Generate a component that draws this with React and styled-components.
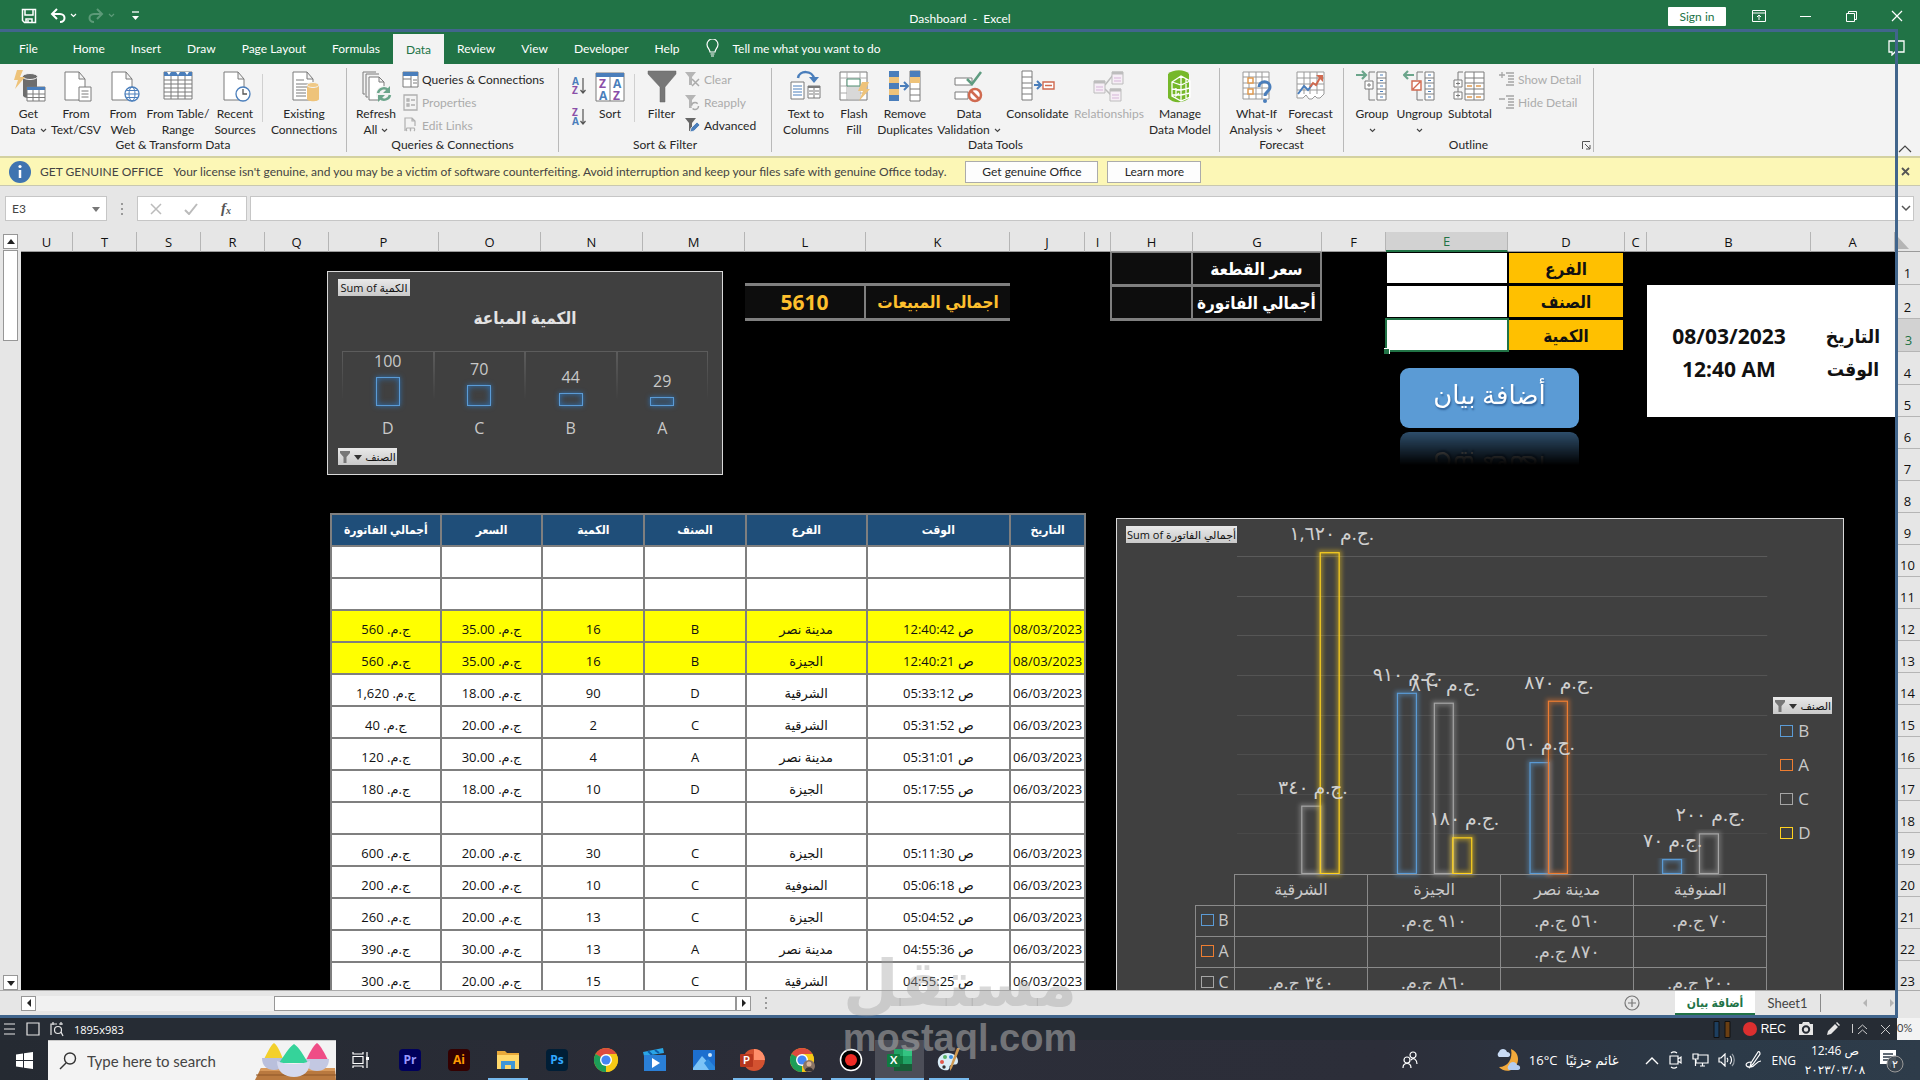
import React from 'react'
import styled, { createGlobalStyle, css } from 'styled-components'

const ui = `Lato, 'DejaVu Sans', sans-serif`
const cells = `'Open Sans', 'DejaVu Sans', sans-serif`
const narrow = `'Open Sans', 'DejaVu Sans Condensed', 'DejaVu Sans', sans-serif`
const GREEN = '#217346'

const GlobalStyle = createGlobalStyle`
  * { box-sizing: border-box; }
  body { margin: 0; font-family: ${ui}; font-size: 12px; color: #262626; overflow: hidden; }
  button, input { font-family: inherit; font-size: inherit; color: inherit; }
  button { border: 0; padding: 0; background: none; white-space: nowrap; }
  svg { display: block; flex: none; }
`

const Window = styled.div`
  position: relative;
  display: flex;
  flex-direction: column;
  height: 100vh;
  background: #e6e6e6;
`

/* ---------- title bar and tabs ---------- */

const TitleBar = styled.header`
  display: grid;
  grid-template-columns: 1fr auto 1fr;
  align-items: center;
  flex: none;
  height: 32px;
  background: ${GREEN};
  color: #fff;
`
const QuickAccess = styled.div`
  display: flex;
  align-items: center;
  gap: 8px;
  padding-left: 21px;

  button:first-child { margin-right: 5px; }
`
const Title = styled.h1`
  margin: 4px 0 0;
  font-size: 12px;
  font-weight: 400;
  white-space: pre;
`
const WindowButtons = styled.div`
  display: flex;
  align-items: center;
  justify-content: flex-end;
`
const WindowButton = styled.button`
  display: grid;
  place-items: center;
  width: 46px;
`
const SignIn = styled.button`
  width: 58px;
  height: 19px;
  margin-right: 10px;
  border-radius: 1px;
  background: #fff;
  color: ${GREEN};
`

const TabBar = styled.nav`
  display: flex;
  align-items: stretch;
  flex: none;
  height: 32px;
  padding-left: 6px;
  background: ${GREEN};
  color: #fff;
`
const Tab = styled.button`
  padding: 0 13px;
  ${({ $wide }) => $wide && css`padding-right: 22px;`}
  ${({ $active }) => $active && css`
    margin-top: 2px;
    background: #f3f3f3;
    color: ${GREEN};
  `}
`
const TellMe = styled.button`
  display: flex;
  align-items: center;
  gap: 13px;
  margin-left: 14px;
`
const Comments = styled.button`
  margin-left: auto;
  padding-right: 14px;
`

/* ---------- ribbon ---------- */

const Ribbon = styled.div`
  display: flex;
  flex: none;
  height: 92px;
  padding: 4px 0;
  background: #f3f3f3;
  position: relative;
`
const Group = styled.section`
  display: flex;
  flex-direction: column;
  width: ${({ $width }) => $width}px;
  border-right: 1px solid #b9b9b9;
`
const GroupBody = styled.div`
  display: flex;
  height: 72px;
  padding-left: ${({ $pad }) => $pad || 5}px;
`
const GroupLabel = styled.h2`
  position: relative;
  margin: 0;
  font-size: 12px;
  line-height: 14px;
  font-weight: 400;
  text-align: center;
`
const BigButton = styled.button`
  display: flex;
  flex-direction: column;
  align-items: center;
  width: ${({ $width }) => $width}px;
  padding-top: 2px;
  line-height: 16px;
  color: ${({ disabled }) => (disabled ? '#ababab' : '#262626')};

  svg.big { margin-bottom: 2px; }
`
const Line = styled.span`
  display: flex;
  align-items: center;
  gap: 4px;
  min-height: 16px;
`
const SmallList = styled.div`
  display: flex;
  flex-direction: column;
  padding-left: ${({ $pad }) => $pad || 0}px;
`
const SortList = styled(SmallList)`
  gap: 7px;
  padding-top: 5px;
`
const SmallButton = styled.button`
  display: flex;
  align-items: center;
  gap: 3px;
  height: 23px;
  color: ${({ disabled }) => (disabled ? '#ababab' : '#262626')};
`
const Divider = styled.i`
  width: 1px;
  height: 48px;
  margin: 6px 4px 0 2px;
  background: #d0d0d0;
`
const Launcher = styled.button`
  position: absolute;
  right: 2px;
  top: 3px;
`
const Collapse = styled.button`
  position: absolute;
  right: 8px;
  bottom: 3px;
`

/* ---------- message bar ---------- */

const Notice = styled.div`
  display: flex;
  align-items: center;
  flex: none;
  height: 30px;
  padding: 0 10px 0 9px;
  border-top: 2px solid #d3d1a0;
  border-bottom: 1px solid #c9c8b0;
  background: #fcf7b6;
  color: #444;

  strong { margin: 0 10px 0 9px; font-weight: 400; }
  > button:last-child { margin-left: auto; }
`
const NoticeButton = styled.button`
  width: ${({ $width }) => $width}px;
  height: 22px;
  margin-left: ${({ $gap }) => $gap}px;
  border: 1px solid #ababab;
  background: #fdfdfd;
  color: #262626;
`

/* ---------- formula bar ---------- */

const FormulaBar = styled.div`
  display: flex;
  flex: none;
  height: 46px;
  padding: 10px 6px 11px 5px;
`
const NameBox = styled.div`
  display: flex;
  align-items: center;
  width: 102px;
  padding-right: 6px;
  border: 1px solid #c6c6c6;
  background: #fff;

  input { width: 100%; padding: 0 0 0 6px; border: 0; outline: 0; background: none; color: #444; }
`
const Grip = styled.div`
  display: grid;
  place-items: center;
  width: 30px;
`
const FormulaButtons = styled.div`
  display: flex;
  align-items: center;
  justify-content: space-between;
  width: 110px;
  padding: 0 12px;
  border: 1px solid #c6c6c6;
  background: #fff;
`
const FormulaBox = styled.div`
  display: flex;
  align-items: center;
  flex: 1;
  margin-left: 3px;
  padding-right: 2px;
  border: 1px solid #c6c6c6;
  background: #fff;

  input { flex: 1; border: 0; outline: 0; background: none; }
`

/* ---------- sheet ---------- */

const Workspace = styled.main`
  display: flex;
  flex: 1;
  min-height: 0;
  font-family: ${cells};
`
const VerticalScroll = styled.div`
  display: flex;
  flex-direction: column;
  width: 21px;
  padding: 2px 3px 0;
`
const ScrollButton = styled.button`
  display: grid;
  place-items: center;
  width: 15px;
  height: 15px;
  flex: none;
  border: 1px solid #979797;
  background: #fff;
`
const Thumb = styled.div`
  border: 1px solid #979797;
  background: #fff;
  ${({ $vertical }) => $vertical ? css`height: 91px; margin: 1px 0 auto;` : css`flex: 0 0 462px; height: 15px;`}
`

const columns = [
  ['U', 52], ['T', 64], ['S', 64], ['R', 64], ['Q', 64], ['P', 110], ['O', 102], ['N', 102],
  ['M', 102], ['L', 121], ['K', 144], ['J', 75], ['I', 26], ['H', 82], ['G', 129], ['F', 64],
  ['E', 122], ['D', 117], ['C', 22], ['B', 164], ['A', 84],
]
const col = (letter) => columns.findIndex(([l]) => l === letter) + 1

const Sheet = styled.div`
  display: grid;
  flex: 1;
  min-width: 0;
  grid-template-columns: ${columns.map(([, w]) => `minmax(0, ${w}fr)`).join(' ')} 25px;
  grid-template-rows: 20px 33px 34px 33px 33px repeat(19, 32px);
  overflow: hidden;
  background: #000;
`
const ColumnHead = styled.div`
  grid-row: 1;
  display: grid;
  place-items: center;
  border-right: 1px solid #b5b5b5;
  border-bottom: ${({ $on }) => ($on ? `2px solid ${GREEN}` : '1px solid #9b9b9b')};
  background: ${({ $on }) => ($on ? '#d2d2d2' : '#e6e6e6')};
  color: ${({ $on }) => ($on ? GREEN : '#111')};
  font-size: 13px;
  line-height: 18px;
`
const RowHead = styled(ColumnHead)`
  grid-row: ${({ $row }) => $row + 1};
  grid-column: 22;
  place-items: end center;
  padding-bottom: 2px;
  border-right: 0;
  border-left: ${({ $on }) => ($on ? `2px solid ${GREEN}` : '0')};
  border-bottom: 1px solid #b5b5b5;
`
const Corner = styled.div`
  grid-row: 1;
  grid-column: 22;
  padding: 4px 0 0 2px;
  border-bottom: 1px solid #9b9b9b;
  background: #e6e6e6;
`
const area = css`
  grid-row: ${({ $row, $rows = 1 }) => `${$row + 1} / span ${$rows}`};
  grid-column: ${({ $from, $to }) => `${col($from)} / ${col($to || $from) + 1}`};
`
const FieldLabel = styled.label`
  ${area}
  display: grid;
  place-items: center;
  margin: 1px 2px 2px 1px;
  background: #ffc000;
  color: #111;
  font-family: ${narrow};
  font-size: 17px;
  font-weight: 700;
`
const FieldInput = styled.input`
  ${area}
  width: auto;
  min-width: 0;
  margin: ${({ $active }) => ($active ? '-1px -1px 0 -1px' : '1px 1px 2px 1px')};
  border: ${({ $active }) => ($active ? `2px solid ${GREEN}` : '0')};
  border-radius: 0;
  outline: 0;
  background: #fff;
`
const FillHandle = styled.i`
  ${area}
  align-self: end;
  z-index: 1;
  width: 6px;
  height: 6px;
  margin: 0 0 -2px -2px;
  border: 1px solid #fff;
  border-width: 1px 1px 0 0;
  background: ${GREEN};
`
const DarkBox = styled.dl`
  ${area}
  display: grid;
  grid-template-columns: ${({ $columns }) => $columns};
  margin: ${({ $margin }) => $margin};
  border: solid #7f7f7f;
  border-width: ${({ $edges }) => $edges};
  background: #0d0d0d;
  color: ${({ $color }) => $color};
  font-family: ${narrow};
  font-weight: 700;

  dt, dd {
    display: grid;
    place-items: center;
    min-width: 0;
    margin: 0;
    line-height: 24px;
    white-space: nowrap;
  }
  dt { font-size: 17px; }
  dd { border-right: 2px solid #7f7f7f; font-size: 21px; }
  dt:nth-of-type(2), dd:nth-of-type(2) { border-top: 3px solid #7f7f7f; }
`
const DateCard = styled.dl`
  ${area}
  display: grid;
  grid-template-columns: 164fr 84fr;
  grid-auto-rows: 33px;
  margin: 0;
  padding-top: 34px;
  background: #fff;
  color: #111;
  font-family: ${narrow};
  font-size: 21px;
  font-weight: 700;

  dt, dd { display: grid; place-items: center; margin: 0; white-space: nowrap; }
  dt { font-size: 19px; }
`
const AddButton = styled.button`
  ${area}
  height: 60px;
  margin: 16px 46px 0 14px;
  padding-bottom: 8px;
  border-radius: 9px;
  background: #5b9bd5;
  color: #fff;
  font-size: 26px;
  line-height: 50px;
  text-shadow: 1px 2px 2px #2f5f96;
  -webkit-box-reflect: below 4px linear-gradient(transparent 45%, rgba(0, 0, 0, 0.5));
`

const DataTable = styled.table`
  ${area}
  align-self: start;
  width: 100%;
  margin-left: 1px;
  border-collapse: collapse;
  table-layout: fixed;
  background: #fff;
  color: #111;
  font-size: 13px;

  th, td {
    height: 32px;
    padding: 0;
    border: 2px solid #7f7f7f;
    text-align: center;
    vertical-align: bottom;
    line-height: 18px;
    white-space: nowrap;
  }
  td { padding-bottom: 3px; }
  th {
    vertical-align: middle;
    background: #1f4e79;
    color: #fff;
    font-family: ${narrow};
    font-size: 12px;
  }
`
const DataRow = styled.tr`
  background: ${({ $marked }) => ($marked ? '#ffff00' : '#fff')};
`

/* ---------- charts ---------- */

const FieldButton = styled.button`
  display: flex;
  align-items: center;
  justify-content: center;
  gap: 3px;
  width: ${({ $width }) => $width}px;
  height: 17px;
  background: linear-gradient(#e9e9e9, #c9c9c9);
  color: #111;
  font-size: 11px;
`
const SmallChart = styled.section`
  ${area}
  display: flex;
  flex-direction: column;
  margin: 19px 22px 6px -2px;
  padding: 7px 10px 9px;
  border: 1px solid #d9d9d9;
  background: #404040;
  z-index: 1;

  h3 {
    margin: 8px 0 19px;
    color: #e3e3e3;
    font-family: ${narrow};
    font-size: 17px;
    line-height: 28px;
    text-align: center;
  }
`
const Bars = styled.div`
  display: grid;
  grid-template-columns: repeat(4, 1fr);
  margin: 0 4px auto;
`
const BarColumn = styled.div`
  display: flex;
  flex-direction: column;
  align-items: center;
  height: 86px;
  color: #c9c9c9;
  font-size: 16px;
  line-height: 18px;
  border-top: 1px solid #5c5c5c;
  background: linear-gradient(#5c5c5c, #404040) left top / 1px 48px no-repeat,
    linear-gradient(#5c5c5c, #404040) right top / 1px 48px no-repeat;

  span { margin-top: auto; }
  b { margin-top: 13px; font-weight: 400; }
`
const Bar = styled.i`
  width: 24px;
  margin-top: 7px;
  border: 1px solid #5b9bd5;
  box-shadow: 0 0 5px #2f70b0, inset 0 0 6px #2f70b0;
`
const BigChart = styled.section`
  ${area}
  display: grid;
  grid-template-columns: 118fr 532fr 76fr;
  grid-template-rows: 355px auto;
  margin: 5px 51px 0 5px;
  border: 1px solid #d9d9d9;
  border-bottom: 0;
  background: #404040;
  color: #c9c9c9;
  z-index: 1;

  > button { margin: 7px 0 0 9px; }
  > svg { overflow: visible; width: 100%; height: 355px; }
`
const Legend = styled.ul`
  display: flex;
  flex-direction: column;
  gap: 16px;
  margin: 178px 0 0 6px;
  padding: 0;
  list-style: none;
  font-size: 17px;
  line-height: 18px;

  li { display: flex; align-items: center; gap: 5px; padding-left: 7px; }
  li:first-child { padding: 0; height: 17px; margin-bottom: -8px; }
`
const Swatch = styled.i`
  display: inline-block;
  width: 13px;
  height: 12px;
  flex: none;
  border: 1px solid ${({ $color }) => $color};
`
const ChartTable = styled.table`
  grid-column: 1 / 3;
  justify-self: end;
  width: 88%;
  border-collapse: collapse;
  table-layout: fixed;
  font-size: 18px;

  th, td {
    height: 31px;
    padding: 0 0 3px;
    border: 1px solid #8a8a8a;
    font-weight: 400;
    text-align: center;
    line-height: 22px;
    white-space: nowrap;
  }
  th { font-size: 16px; }
  td:first-child { border: 0; }
  tbody th i { margin-right: 4px; }
`

/* ---------- sheet bar, recorder, taskbar ---------- */

const SheetBar = styled.footer`
  display: flex;
  align-items: center;
  flex: none;
  height: 28px;
  padding: 0 22px 3px 21px;
  border-top: 1px solid #ababab;
`
const Track = styled.div`
  flex: 0 0 238px;
  height: 15px;
  background: #f1f1f1;
`
const SheetTabs = styled.nav`
  display: flex;
  align-items: stretch;
  align-self: stretch;
  margin-left: auto;
`
const SheetTab = styled.button`
  display: grid;
  place-items: center;
  width: ${({ $width }) => $width}px;
  font-size: 13px;
  color: #444;
  ${({ $active }) => $active && css`
    border-bottom: 2px solid ${GREEN};
    background: #fff;
    color: ${GREEN};
    font-family: ${narrow};
    font-size: 12px;
    font-weight: 700;
  `}
`
const SheetArrows = styled.div`
  display: flex;
  align-items: center;
  justify-content: space-between;
  width: 78px;
  margin: 3px 0;
  padding: 0 2px 0 40px;
  border-left: 1px solid #8a8a8a;
`
const Recorder = styled.div`
  display: flex;
  align-items: center;
  flex: none;
  height: 22px;
  padding-left: 3px;
  background: #262c34;
  color: #fff;

  output { margin-left: 9px; font-family: ${cells}; font-size: 11px; }
`
const RecorderTools = styled.div`
  display: flex;
  align-items: center;
  gap: 12px;
  margin-left: auto;
  padding-right: 6px;
`
const Record = styled.button`
  display: flex;
  align-items: center;
  gap: 4px;
  font-family: 'Liberation Sans', sans-serif;
  font-size: 12px;
`
const ZoomLevel = styled.span`
  align-self: stretch;
  width: 23px;
  background: #f3f3f3;
  color: #444;
  font-size: 11px;
  line-height: 20px;
`
/* outline of the region being recorded */
const CaptureFrame = styled.div`
  position: absolute;
  inset: 29px 22px 62px -3px;
  border: 3px solid #41658c;
  pointer-events: none;
  z-index: 3;
`
const Taskbar = styled.footer`
  display: flex;
  align-items: stretch;
  flex: none;
  height: 40px;
  background: linear-gradient(90deg, #252a32, #2b2d38 40%, #2c2e39 72%, #2c3a48 90%, #2e3c4a);
  color: #fff;
`
const StartButton = styled.button`
  display: grid;
  place-items: center;
  width: 48px;
`
const SearchBox = styled.label`
  display: flex;
  align-items: center;
  gap: 10px;
  width: 288px;
  padding-left: 11px;
  border-top: 1px solid #c9c9c9;
  background: #f3f3f3;
  color: #444;

  input { flex: 1; min-width: 0; padding: 0; border: 0; outline: 0; background: none; font-size: 15px; }
  input::placeholder { color: #444; opacity: 1; }
  svg:last-child { align-self: flex-end; }
`
const AppButton = styled.button`
  display: grid;
  place-items: center;
  width: 49px;
  ${({ $open }) => $open && css`
    background: linear-gradient(#76b9ed, #76b9ed) bottom / 40px 2px no-repeat;
  `}
  ${({ $active }) => $active && css`
    background: linear-gradient(#76b9ed, #76b9ed) bottom / 49px 2px no-repeat, #4c4e58;
  `}
`
const Tray = styled.div`
  display: flex;
  align-items: center;
  margin-left: auto;
  padding-right: 16px;
  font-family: ${cells};
`
const Weather = styled.button`
  display: flex;
  align-items: center;
  gap: 8px;
  margin: 0 26px 0 78px;
  font-size: 13px;
`
const TrayIcons = styled.div`
  display: flex;
  align-items: center;
  gap: 9px;
`
const Clock = styled.time`
  display: flex;
  flex-direction: column;
  align-items: center;
  width: 60px;
  margin: 0 15px 0 9px;
  line-height: 19px;
`
const Watermark = styled.div`
  position: absolute;
  left: 44%;
  bottom: 22px;
  width: 12%;
  display: flex;
  flex-direction: column;
  align-items: center;
  color: rgba(160, 160, 160, 0.4);
  font-family: 'DejaVu Sans', sans-serif;
  font-size: 64px;
  line-height: 68px;
  font-weight: 700;
  pointer-events: none;
  z-index: 4;

  b { color: rgba(165, 165, 165, 0.6); font-family: 'Liberation Sans', sans-serif; font-size: 38px; line-height: 40px; }
`

/* ---------- icons ---------- */

const G = '#7a7a7a'
const B = '#4a7ebb'

const Caret = ({ color = '#444' }) => (
  <svg width="7" height="5" viewBox="0 0 7 5" fill="none" stroke={color} strokeWidth="1.1"><path d="M1 1l2.500 2.500L6 1" /></svg>
)
const Triangle = ({ dir = 'down', color = '#222' }) => {
  const d = { down: 'M0 2h8L4 7z', up: 'M0 6h8L4 1z', left: 'M6 0v8L2 4z', right: 'M2 0v8l4-4z' }[dir]
  return <svg width="8" height="8" viewBox="0 0 8 8"><path d={d} fill={color} /></svg>
}
const FunnelMini = () => (
  <svg width="12" height="12" viewBox="0 0 12 12"><path d="M1 0h10v2L7.500 6v6h-3V6L1 2z" fill="#777" /></svg>
)
const Page = () => <path d="M6 2h14l6 7v21H6zM20 2v7h6" fill="#fff" stroke={G} />

const art = {
  getData: (
    <>
      <path d="M11 7v19c2 2 4 2 6 2h8V7" fill="#6d6d6d" />
      <ellipse cx="18" cy="6.500" rx="7.500" ry="3" fill="#6d6d6d" stroke="#f3f3f3" />
      <path d="M5 0h6L8 7h5L3 19l3-9H2z" fill="#eec37a" />
      <path d="M15 17h18v14H15z" fill="#fff" stroke={G} /><path d="M15 17h18v3H15z" fill={B} />
      <path d="M15 24h18M15 27.500h18M21 20v11M27 20v11" stroke={G} />
    </>
  ),
  textCsv: (<><Page /><path d="M20 17h12v14H20z" fill="#fff" stroke={G} /><path d="M22.500 21h7M22.500 24h7M22.500 27h7" stroke={G} /></>),
  web: (<><Page /><circle cx="26" cy="24" r="7" fill="#fff" stroke={B} strokeWidth="1.300" /><ellipse cx="26" cy="24" rx="3" ry="7" fill="none" stroke={B} /><path d="M19 24h14M20.500 20.500h11M20.500 27.500h11" stroke={B} /></>),
  table: (<><path d="M3 2h28v27H3z" fill="#fff" stroke={G} /><path d="M3 2h28v4H3z" fill={B} /><path d="M6 2h4l-2 3zM15 2h4l-2 3zM24 2h4l-2 3z" fill="#fff" /><path d="M3 10h28M3 14h28M3 18h28M3 22h28M3 26h28M10 6v23M17 6v23M24 6v23" stroke={G} /></>),
  recent: (<><Page /><circle cx="25" cy="24" r="7" fill="#fff" stroke={B} strokeWidth="1.300" /><path d="M25 19v5h4" fill="none" stroke="#555" strokeWidth="1.300" /></>),
  existing: (<><Page /><path d="M9 10h8M9 14h13M9 17h13M9 20h10M9 23h10M9 26h10" stroke={G} /><path d="M20 15v14c0 3 12 3 12 0V15" fill="#eec37a" /><ellipse cx="26" cy="15" rx="6" ry="2.500" fill="#f0c986" stroke="#f3f3f3" /></>),
  refresh: (<><path d="M4 2h13M4 2v22h2M7 4h13M7 4v23h2" fill="none" stroke={G} /><path d="M10 7h10l5 5v18H10zM20 7v5h5" fill="#fff" stroke={G} /><circle cx="25" cy="24" r="8" fill="#f3f3f3" /><path d="M19 23a6 6 0 0 1 10-3M31 25a6 6 0 0 1-10 3" fill="none" stroke="#6ba58b" strokeWidth="2.500" /><path d="M31 16v7h-7zM19 32v-7h7z" fill="#6ba58b" /></>),
  sort: (<><path d="M3 3h28v28H3z" fill="#fff" stroke={G} /><path d="M3 3h28v4H3z" fill={B} /><path d="M17 7v24" stroke={G} /><g fontSize="12" fontWeight="700" fontFamily="Open Sans, sans-serif"><text x="6" y="18" fill="#8a4fa8">Z</text><text x="6" y="30" fill={B}>A</text><text x="20" y="18" fill={B}>A</text><text x="20" y="30" fill="#8a4fa8">Z</text></g></>),
  filter: <path d="M3 1h28v3L20 17v15h-5V17L3 4z" fill="#777" stroke="#666" strokeWidth=".5" />,
  textCols: (<><path d="M9 8c1-8 15-8 16 1" fill="none" stroke={B} strokeWidth="2.500" /><path d="M20 7h10l-5 6z" fill={B} /><path d="M2 12h13v17H2z" fill="#fff" stroke={G} /><path d="M4 16h9M4 19h9M4 22h9M4 25h9" stroke={B} /><path d="M19 16h12v12H19z" fill="#fff" stroke={G} /><path d="M19 16h12v2H19z" fill={G} /><path d="M25 16v12M20 21h4M20 24h4M26 21h4M26 24h4" stroke={G} /></>),
  flash: (<><path d="M3 2h27v28H3z" fill="#fff" stroke={G} /><path d="M3 8h27M3 16h27M3 23h27M10 2v28M23 2v28" stroke="#aaa" /><path d="M10 9h13v7H10z" fill="#fff" stroke="#4e8f72" /><path d="M10 17h13v12H10z" fill="#d8d8d8" /><path d="M25 12h7l-3 7h4l-11 12 4-10h-5z" fill="#eec37a" /></>),
  dupes: (<><path d="M1 1h10v30H1z" fill={B} /><path d="M1 7h10v6H1zM1 19h10v6H1z" fill="#eec37a" /><path d="M12 16h7" stroke={B} strokeWidth="2" /><path d="M16 12l4 4-4 4" fill="none" stroke={B} strokeWidth="2" /><path d="M22 1h10v30H22z" fill="#fff" stroke={G} /><path d="M22 1h10v6H22z" fill={B} /><path d="M22 7h10v6H22z" fill="#eec37a" /><path d="M22 19h10M22 25h10" stroke={G} /></>),
  validate: (<><path d="M3 8h17v7H3zM3 22h13v7H3z" fill="#fff" stroke={G} /><path d="M15 9l5 5L29 2" fill="none" stroke="#5f9c80" strokeWidth="2.500" /><circle cx="23" cy="25" r="6" fill="#fff" stroke="#d06a50" strokeWidth="2.500" /><path d="M19 21l8 8" stroke="#d06a50" strokeWidth="2.500" /></>),
  consolidate: (<><path d="M1 1h10v29H1zM1 7h10M1 13h10M1 18h10M1 24h10" fill="#fff" stroke={G} /><path d="M13 15h6" stroke={B} strokeWidth="2" /><path d="M16 11l4 4-4 4" fill="none" stroke={B} strokeWidth="2" /><path d="M22 12h11v7H22zM24 15.500h7" fill="#fff" stroke="#d06a50" strokeWidth="1.400" /></>),
  relations: (<g fill="#f6eef6" stroke="#bdbdbd"><path d="M13 15l8-10M13 19l7 7" fill="none" strokeWidth="1.500" /><path d="M2 11h11v12H2zM20 2h11v12H20zM18 19h11v12H18z" /><path d="M2 12h11M20 3h11M18 20h11" strokeWidth="3" /><path d="M4 17h7M4 20h7M22 8h7M22 11h7M20 25h7M20 28h7" stroke="#d5b5d8" /></g>),
  model: (<><path d="M5 4c5-5 17-5 21 0v24c-4 5-16 6-21 0z" fill="#76b82a" /><path d="M9 12l9-6 9 5v16l-9 4-9-5zM18 6v25M9 12l9 3 9-4M9 19l9 1 9-2M9 25l9 0 9-2M23 9v20M13 18v8l3-3" fill="none" stroke="#fff" strokeWidth="1.300" /></>),
  whatIf: (<><path d="M3 2h26v27H3zM3 7h26M3 13h26M3 18h26M3 24h26M9 2v27M16 2v27M22 2v27" fill="#fff" stroke="#999" /><path d="M8 8h5v5H8zM8 19h5v5H8z" fill="#fff" stroke="#e09a50" strokeWidth="1.500" /><path d="M19 17c0-7 11-7 11 0 0 5-5 4-5 9" fill="none" stroke={B} strokeWidth="3" /><circle cx="25" cy="31" r="2" fill={B} /></>),
  forecast: (<><path d="M3 2h27v22l-4 4h-3l-2-2-3 3h-3l-3-4-3 3H3zM3 8h27M3 14h27M3 20h27M10 2v22M16 2v22M23 2v22" fill="#fff" stroke="#999" /><path d="M4 24l6-8 4 4 4-5" fill="none" stroke={B} strokeWidth="2" /><path d="M16 17l3-4 3 2 5-9" fill="none" stroke="#d06a50" strokeWidth="2" /><path d="M22 5h7v7z" fill="#d06a50" /></>),
  group: (<><path d="M1 5h9M7 1l4 4-4 4" fill="none" stroke="#6ba58b" strokeWidth="2.200" /><path d="M20 2h-6v8M14 19v11h6" fill="none" stroke={G} /><path d="M10 11h8v8h-8zM14 13v4M12 15h4" fill="#fff" stroke={G} /><path d="M22 2h9v28h-9zM22 8h9M22 13h9M22 19h9M22 24h9" fill="#fff" stroke={G} /><path d="M25 5h3M25 10.500h3M25 16h3M25 21.500h3M25 27h3" stroke={B} /></>),
  ungroup: (<><path d="M2 5h9M5 1L1 5l4 4" fill="none" stroke="#6ba58b" strokeWidth="2.200" /><path d="M20 2h-6v8M14 19v11h6" fill="none" stroke={G} /><path d="M9 11h9v9H9zM10 19l7-7" fill="#fff" stroke="#d06a50" strokeWidth="1.400" /><path d="M22 2h9v28h-9zM22 8h9M22 13h9M22 19h9M22 24h9" fill="#fff" stroke={G} /><path d="M25 5h3M25 10.500h3M25 16h3M25 21.500h3M25 27h3" stroke={B} /></>),
  subtotal: (<><path d="M10 2H5v8M5 18v4" fill="none" stroke={G} /><path d="M1 10h8v7H1zM1 22h8v7H1zM5 11.500v4M3 13.500h4M5 23.500v4M3 25.500h4" fill="#fff" stroke={G} /><path d="M12 2h19v28H12zM12 8h19M12 13h19M12 19h19M12 24h19M21 2v28" fill="#fff" stroke={G} /><path d="M14 16h5M23 16h5M14 27h5M23 27h5" stroke="#e09a50" strokeWidth="1.500" /></>),
}
const Art = ({ name }) => <svg className="big" width="34" height="34" viewBox="0 0 34 34">{art[name]}</svg>

const small = {
  queries: (<><path d="M1 1h15v15H1z" fill="#fff" stroke={G} /><path d="M1 1h15v4H1z" fill={B} /><path d="M1 8h8M9 5v11M11 9h4M11 12h4" stroke={G} /></>),
  props: <path d="M2 1h13v15H2zM5 5h2v2H5zM5 10h2v2H5zM9 6h4M9 11h4" fill="none" stroke="#b0b0b0" strokeWidth="1.300" />,
  links: <path d="M3 14V1h7l3 3v5M10 1v3h3M5 14a2 2 0 0 1 0-3h3a2 2 0 0 1 0 3M12 14a2 2 0 0 0 0-3H9a2 2 0 0 0 0 3" fill="none" stroke="#b0b0b0" strokeWidth="1.200" />,
  clear: <><path d="M1 1h11L8 6v8H5V6z" fill="#b5b5b5" /><path d="M8 8l7 7M15 8l-7 7" stroke="#aaa" strokeWidth="1.500" /></>,
  reapply: <><path d="M1 1h11L8 6v8H5V6z" fill="#b5b5b5" /><circle cx="11" cy="12" r="3.500" fill="#f3f3f3" stroke="#aaa" strokeWidth="1.500" strokeDasharray="8 3" /></>,
  advanced: <><path d="M1 1h11L8 6v8H5V6z" fill="#666" /><path d="M6 15l1-4 6-6 3 3-6 6z" fill={B} stroke="#f3f3f3" strokeWidth=".8" /></>,
  show: <path d="M1 4h6M4 1v6M8 2h8M10 5h6M10 8h6M10 11h6M8 14h8" stroke="#a5a5a5" strokeWidth="1.300" />,
  hide: <path d="M1 5h6M8 2h8M10 5h6M10 8h6M10 11h6M8 14h8" stroke="#a5a5a5" strokeWidth="1.300" />,
}
const Small = ({ name }) => <svg width="17" height="17" viewBox="0 0 17 17">{small[name]}</svg>

const SortIcon = ({ top, bottom }) => (
  <svg width="17" height="22" viewBox="0 0 17 22">
    <g fontSize="10" fontWeight="700" fontFamily="Open Sans, sans-serif">
      <text x="1" y="10" fill={top === 'A' ? B : '#8a4fa8'}>{top}</text>
      <text x="1" y="19" fill={top === 'A' ? '#8a4fa8' : B}>{bottom}</text>
    </g>
    <path d="M12 3v15M9.500 15l2.500 3 2.500-3" fill="none" stroke="#555" strokeWidth="1.200" />
  </svg>
)

const Chrome = ({ badge }) => (
  <svg width="26" height="26" viewBox="0 0 26 26">
    <circle cx="13" cy="13" r="12" fill="#e8b90c" />
    <path d="M13 13L2.600 7A12 12 0 0 1 23.400 7z" fill="#dd4b3e" />
    <path d="M2.600 7A12 12 0 0 0 13 25l5-9-5-3z" fill="#1c9d58" />
    <path d="M13 25A12 12 0 0 0 23.400 7H13z" fill="#f6c915" />
    <circle cx="13" cy="13" r="6" fill="#fff" /><circle cx="13" cy="13" r="4.600" fill="#4486f4" />
    {badge && <><circle cx="20" cy="19" r="6" fill="#8a7466" /><circle cx="20" cy="17" r="2.500" fill="#d8b59a" /><path d="M16 24c0-5 8-5 8 0z" fill="#3a3434" /></>}
  </svg>
)
const Adobe = ({ bg, color, children }) => (
  <svg width="22" height="22" viewBox="0 0 22 22">
    <rect width="22" height="22" rx="4" fill={bg} />
    <text x="11" y="15" textAnchor="middle" fontSize="12" fontWeight="700" fill={color} fontFamily="Open Sans, sans-serif">{children}</text>
  </svg>
)

const apps = [
  { name: 'Premiere Pro', icon: <Adobe bg="#00005b" color="#9999ff">Pr</Adobe> },
  { name: 'Illustrator', icon: <Adobe bg="#330000" color="#ff9a00">Ai</Adobe> },
  { name: 'File Explorer', open: true, icon: <svg width="24" height="22" viewBox="0 0 24 22"><path d="M1 2h8l2 2h12v16H1z" fill="#e8a93a" /><path d="M1 6h22v14H1z" fill="#ffd86b" /><path d="M5 20v-8h14v8h-4v-4H9v4z" fill="#3f96d8" /></svg> },
  { name: 'Photoshop', icon: <Adobe bg="#001e36" color="#31a8ff">Ps</Adobe> },
  { name: 'Chrome', icon: <Chrome /> },
  { name: 'Movies', icon: <svg width="26" height="26" viewBox="0 0 26 26"><path d="M1 5l20-4 1 5L2 9z" fill="#2aa6e6" /><path d="M6 4l4 4M13 3l4 3" stroke="#0d5da8" strokeWidth="2" /><path d="M2 8h22v16H2z" fill="#2a7fd6" /><path d="M10 11l8 5-8 5z" fill="#fff" /></svg> },
  { name: 'Photos', icon: <svg width="24" height="24" viewBox="0 0 24 24"><path d="M1 2h22v20H1z" fill="#1d6fcf" /><path d="M1 20L10 8l13 14H1z" fill="#7cc4f7" /><path d="M12 15l4-4 7 8v3h-6z" fill="#2b88dc" /><circle cx="18" cy="7" r="2" fill="#cfe8fb" /></svg> },
  { name: 'PowerPoint', open: true, icon: <svg width="26" height="24" viewBox="0 0 26 24"><circle cx="14" cy="12" r="11" fill="#d35230" /><path d="M14 1a11 11 0 0 1 11 11H14z" fill="#ff8f6b" /><rect y="6" width="13" height="13" rx="1" fill="#b7371e" /><text x="3" y="16" fontSize="11" fontWeight="700" fill="#fff">P</text></svg> },
  { name: 'Chrome profile', open: true, icon: <Chrome badge /> },
  { name: 'Recorder', open: true, icon: <svg width="24" height="24" viewBox="0 0 24 24"><circle cx="12" cy="12" r="10.500" fill="#000" stroke="#fff" strokeWidth="1.500" /><circle cx="12" cy="12" r="6" fill="#ee2a24" /></svg> },
  { name: 'Excel', open: true, active: true, icon: <svg width="26" height="24" viewBox="0 0 26 24"><path d="M7 1h18v22H7z" fill="#21a366" /><path d="M16 1h9v7h-9z" fill="#33c481" /><path d="M7 8h9v8H7z" fill="#107c41" /><path d="M7 16h18v7H7z" fill="#185c37" /><rect y="6" width="13" height="13" rx="1" fill="#107c41" /><text x="3" y="16" fontSize="11" fontWeight="700" fill="#fff">X</text></svg> },
  { name: 'Paint', open: true, icon: <svg width="26" height="26" viewBox="0 0 26 26"><path d="M12 6C4 6 1 12 2 17c1 6 8 7 10 6 3-2 0-4 3-5s7 1 7-4c0-4-4-8-10-8z" fill="#d9ecf7" /><circle cx="6" cy="15" r="2" fill="#e2574c" /><circle cx="9" cy="10" r="2" fill="#58b368" /><circle cx="15" cy="10" r="2" fill="#3b8ede" /><circle cx="8" cy="20" r="1.700" fill="#333" /><path d="M24 1l-8 20-2 3v-4l7-19z" fill="#d09a52" /></svg> },
]

/* ---------- data ---------- */

const heads = ['أجمالي الفاتورة', 'السعر', 'الكمية', 'الصنف', 'الفرع', 'الوقت', 'التاريخ']
const sales = [
  null,
  null,
  ['560', '35.00', '16', 'B', 'مدينة نصر', '12:40:42', '08/03/2023'],
  ['560', '35.00', '16', 'B', 'الجيزة', '12:40:21', '08/03/2023'],
  ['1,620', '18.00', '90', 'D', 'الشرقية', '05:33:12', '06/03/2023'],
  ['40', '20.00', '2', 'C', 'الشرقية', '05:31:52', '06/03/2023'],
  ['120', '30.00', '4', 'A', 'مدينة نصر', '05:31:01', '06/03/2023'],
  ['180', '18.00', '10', 'D', 'الجيزة', '05:17:55', '06/03/2023'],
  null,
  ['600', '20.00', '30', 'C', 'الجيزة', '05:11:30', '06/03/2023'],
  ['200', '20.00', '10', 'C', 'المنوفية', '05:06:18', '06/03/2023'],
  ['260', '20.00', '13', 'C', 'الجيزة', '05:04:52', '06/03/2023'],
  ['390', '30.00', '13', 'A', 'مدينة نصر', '04:55:36', '06/03/2023'],
  ['300', '20.00', '15', 'C', 'الشرقية', '04:55:25', '06/03/2023'],
]
const quantities = [['D', 100], ['C', 70], ['B', 44], ['A', 29]]
const series = { B: '#5b9bd5', A: '#ed7d31', C: '#a5a5a5', D: '#ffd21f' }
const branches = ['الشرقية', 'الجيزة', 'مدينة نصر', 'المنوفية']
const totals = [
  { C: 340, D: 1620 },
  { B: 910, C: 860, D: 180 },
  { B: 560, A: 870 },
  { B: 70, C: 200 },
]
const arabic = (n) => n.toLocaleString('en-US').replace(/\d/g, (d) => '٠١٢٣٤٥٦٧٨٩'[d])

const SalesTable = () => (
  <DataTable $row={9} $rows={15} $from="P" $to="J">
    <colgroup>
      {[110, 102, 102, 102, 121, 144, 75].map((w, i) => <col key={i} width={`${(w / 756) * 100}%`} />)}
    </colgroup>
    <thead>
      <tr>{heads.map((h) => <th key={h}>{h}</th>)}</tr>
    </thead>
    <tbody>
      {sales.map((row, i) => (
        <DataRow key={i} $marked={i === 2 || i === 3}>
          {row ? (
            <>
              <td dir="rtl">ج.م. {row[0]}</td>
              <td dir="rtl">ج.م. {row[1]}</td>
              <td>{row[2]}</td>
              <td>{row[3]}</td>
              <td>{row[4]}</td>
              <td dir="rtl">ص {row[5]}</td>
              <td>{row[6]}</td>
            </>
          ) : heads.map((h) => <td key={h} />)}
        </DataRow>
      ))}
    </tbody>
  </DataTable>
)

const QuantityChart = () => (
  <SmallChart $row={1} $rows={7} $from="P" $to="M">
    <FieldButton $width={72}>Sum of الكمية</FieldButton>
    <h3>الكمية المباعة</h3>
    <Bars>
      {quantities.map(([name, value]) => (
        <BarColumn key={name}>
          <span>{value}</span>
          <Bar style={{ height: Math.round(value * 0.28) + 1 }} />
          <b>{name}</b>
        </BarColumn>
      ))}
    </Bars>
    <FieldButton $width={59}><FunnelMini /><Triangle color="#333" />الصنف</FieldButton>
  </SmallChart>
)

const InvoiceChart = () => (
  <BigChart $row={9} $rows={15} $from="H" $to="A">
    <FieldButton $width={111}>Sum of أجمالي الفاتورة</FieldButton>
    <svg viewBox="0 0 532 355" preserveAspectRatio="none">
      <filter id="glow" x="-100%" y="-10%" width="300%" height="120%"><feGaussianBlur stdDeviation="2" /></filter>
      {[1, 2, 3, 4, 5, 6, 7, 8].map((n) => (
        <path key={n} d={`M0 ${354.5 - Math.round(n * 39.6)}h532`} stroke="#fff" opacity={0.03 + n * 0.014} />
      ))}
      {totals.map((branch, i) => Object.keys(series).map((key, s) => {
        if (!branch[key]) return null
        const box = { x: i * 133 + 28 + s * 18.5, y: 354.5 - branch[key] * 0.198, width: 19, height: branch[key] * 0.198, fill: 'none', stroke: series[key] }
        return <g key={key}><rect {...box} strokeWidth="5" opacity=".45" filter="url(#glow)" /><rect {...box} strokeWidth="1.200" /></g>
      }))}
      {totals.map((branch, i) => Object.keys(series).map((key, s) => branch[key] && (
        <text key={i + key} x={i * 133 + 38 + s * 19} y={342 - branch[key] * 0.198} textAnchor="middle" fontSize="19" fill="#d0d0d0">
          {`\u2066${arabic(branch[key])}\u2069 \u2067ج.م\u2069.`}
        </text>
      )))}
    </svg>
    <Legend>
      <li><FieldButton $width={59}><FunnelMini /><Triangle color="#333" />الصنف</FieldButton></li>
      {Object.entries(series).map(([key, color]) => <li key={key}><Swatch $color={color} />{key}</li>)}
    </Legend>
    <ChartTable>
      <colgroup><col width="6.8%" /><col /><col /><col /><col /></colgroup>
      <thead>
        <tr><td />{branches.map((b) => <th key={b}>{b}</th>)}</tr>
      </thead>
      <tbody>
        {['B', 'A', 'C'].map((key) => (
          <tr key={key}>
            <th><Swatch $color={series[key]} />{key}</th>
            {totals.map((t, i) => <td key={i} dir="rtl">{t[key] ? `${arabic(t[key])} ج.م.` : ''}</td>)}
          </tr>
        ))}
      </tbody>
    </ChartTable>
  </BigChart>
)

const Big = ({ icon, width, lines, drop, disabled }) => (
  <BigButton $width={width} disabled={disabled}>
    <Art name={icon} />
    {lines.map((l, i) => <Line key={l}>{l}{drop && i === lines.length - 1 && <Caret />}</Line>)}
  </BigButton>
)

const tabs = ['File', 'Home', 'Insert', 'Draw', 'Page Layout', 'Formulas', 'Data', 'Review', 'View', 'Developer', 'Help']

function App() {
  return (
    <Window>
      <GlobalStyle />
      <TitleBar>
        <QuickAccess>
          <button aria-label="Save"><svg width="16" height="16" viewBox="0 0 16 16" fill="none" stroke="#fff" strokeWidth="1.500"><path d="M1.500 1.500h13v13h-11l-2-2zM4 2v5h8V2M5 15v-4h6v4M7 12v2" /></svg></button>
          <button aria-label="Undo"><svg width="28" height="16" viewBox="0 0 28 16" fill="none" stroke="#fff"><path d="M7 1L2 6l5 5M2 6h8c6 0 6 8 0 8" strokeWidth="2" /><path d="M21 6l2.500 2.500L26 6" strokeWidth="1.200" /></svg></button>
          <button aria-label="Redo" disabled><svg width="30" height="16" viewBox="0 0 30 16" fill="none" stroke="#5c9a78"><path d="M11 1l5 5-5 5M16 6H8c-6 0-6 8 0 8" strokeWidth="2" /><path d="M23 6l2.500 2.500L28 6" strokeWidth="1.200" /></svg></button>
          <button aria-label="Customize"><svg width="20" height="12" viewBox="0 0 20 12"><path d="M8 2h7" stroke="#fff" strokeWidth="1.300" /><path d="M8 6h7l-3.500 4z" fill="#fff" /></svg></button>
        </QuickAccess>
        <Title>Dashboard  -  Excel</Title>
        <WindowButtons>
          <SignIn>Sign in</SignIn>
          <WindowButton aria-label="Ribbon display"><svg width="14" height="12" viewBox="0 0 14 12" fill="none" stroke="#fff"><path d="M.5.5h13v11H.5zM.5 3h13M7 10V5M5 7l2-2 2 2" /></svg></WindowButton>
          <WindowButton aria-label="Minimize"><svg width="11" height="11" viewBox="0 0 11 11" stroke="#fff"><path d="M0 5.500h11" /></svg></WindowButton>
          <WindowButton aria-label="Restore"><svg width="11" height="11" viewBox="0 0 11 11" fill="none" stroke="#fff"><path d="M.5 2.500h8v8h-8zM2.500 2.500v-2h8v8h-2" /></svg></WindowButton>
          <WindowButton aria-label="Close"><svg width="12" height="12" viewBox="0 0 12 12" stroke="#fff" strokeWidth="1.200"><path d="M1 1l10 10M11 1L1 11" /></svg></WindowButton>
        </WindowButtons>
      </TitleBar>

      <TabBar>
        {tabs.map((t) => <Tab key={t} $active={t === 'Data'} $wide={t === 'File'}>{t}</Tab>)}
        <TellMe>
          <svg width="13" height="18" viewBox="0 0 13 18" fill="none" stroke="#fff" strokeWidth="1.200"><path d="M4 13c0-3-3-4-3-7.500a5.500 5.500 0 0 1 11 0C12 9 9 10 9 13zM4.500 15h4M5 17h3" /></svg>
          Tell me what you want to do
        </TellMe>
        <Comments aria-label="Comments"><svg width="18" height="16" viewBox="0 0 18 16" fill="none" stroke="#fff" strokeWidth="1.300"><path d="M1 1h15v11H7l-3 3v-3H1z" /></svg></Comments>
      </TabBar>

      <Ribbon>
        <Group $width={347}>
          <GroupBody>
            <Big icon="getData" width={47} lines={['Get', 'Data']} drop />
            <Big icon="textCsv" width={48} lines={['From', 'Text/CSV']} />
            <Big icon="web" width={46} lines={['From', 'Web']} />
            <Big icon="table" width={64} lines={['From Table/', 'Range']} />
            <Big icon="recent" width={50} lines={['Recent', 'Sources']} />
            <Divider />
            <Big icon="existing" width={74} lines={['Existing', 'Connections']} />
          </GroupBody>
          <GroupLabel>Get &amp; Transform Data</GroupLabel>
        </Group>
        <Group $width={212}>
          <GroupBody>
            <Big icon="refresh" width={48} lines={['Refresh', 'All']} drop />
            <SmallList $pad={2}>
              <SmallButton><Small name="queries" />Queries &amp; Connections</SmallButton>
              <SmallButton disabled><Small name="props" />Properties</SmallButton>
              <SmallButton disabled><Small name="links" />Edit Links</SmallButton>
            </SmallList>
          </GroupBody>
          <GroupLabel>Queries &amp; Connections</GroupLabel>
        </Group>
        <Group $width={213}>
          <GroupBody $pad={11}>
            <SortList>
              <BigButton $width={18} aria-label="Sort A to Z"><SortIcon top="A" bottom="Z" /></BigButton>
              <BigButton $width={18} aria-label="Sort Z to A"><SortIcon top="Z" bottom="A" /></BigButton>
            </SortList>
            <Big icon="sort" width={44} lines={['Sort']} />
            <Divider />
            <Big icon="filter" width={45} lines={['Filter']} />
            <SmallList>
              <SmallButton disabled><Small name="clear" />Clear</SmallButton>
              <SmallButton disabled><Small name="reapply" />Reapply</SmallButton>
              <SmallButton><Small name="advanced" />Advanced</SmallButton>
            </SmallList>
          </GroupBody>
          <GroupLabel>Sort &amp; Filter</GroupLabel>
        </Group>
        <Group $width={448}>
          <GroupBody $pad={8}>
            <Big icon="textCols" width={52} lines={['Text to', 'Columns']} />
            <Big icon="flash" width={44} lines={['Flash', 'Fill']} />
            <Big icon="dupes" width={58} lines={['Remove', 'Duplicates']} />
            <Big icon="validate" width={70} lines={['Data', 'Validation']} drop />
            <Big icon="consolidate" width={67} lines={['Consolidate']} />
            <Big icon="relations" width={76} lines={['Relationships']} disabled />
            <Big icon="model" width={66} lines={['Manage', 'Data Model']} />
          </GroupBody>
          <GroupLabel>Data Tools</GroupLabel>
        </Group>
        <Group $width={124}>
          <GroupBody $pad={9}>
            <Big icon="whatIf" width={55} lines={['What-If', 'Analysis']} drop />
            <Big icon="forecast" width={53} lines={['Forecast', 'Sheet']} />
          </GroupBody>
          <GroupLabel>Forecast</GroupLabel>
        </Group>
        <Group $width={250}>
          <GroupBody>
            <Big icon="group" width={46} lines={['Group', '']} drop />
            <Big icon="ungroup" width={49} lines={['Ungroup', '']} drop />
            <Big icon="subtotal" width={52} lines={['Subtotal']} />
            <SmallList $pad={2}>
              <SmallButton disabled><Small name="show" />Show Detail</SmallButton>
              <SmallButton disabled><Small name="hide" />Hide Detail</SmallButton>
            </SmallList>
          </GroupBody>
          <GroupLabel>
            Outline
            <Launcher aria-label="Outline settings"><svg width="9" height="9" viewBox="0 0 9 9" fill="none" stroke="#555"><path d="M.5 8V.5H8M3 3l5 5M8 4v4H4" /></svg></Launcher>
          </GroupLabel>
        </Group>
        <Collapse aria-label="Collapse the ribbon"><svg width="14" height="9" viewBox="0 0 14 9" fill="none" stroke="#444" strokeWidth="1.200"><path d="M1 8l6-6 6 6" /></svg></Collapse>
      </Ribbon>

      <Notice>
        <svg width="22" height="22" viewBox="0 0 22 22"><circle cx="11" cy="11" r="11" fill="#3f74b0" /><path d="M11 9v8" stroke="#fff" strokeWidth="2.500" /><circle cx="11" cy="5.500" r="1.600" fill="#fff" /></svg>
        <strong>GET GENUINE OFFICE</strong>
        <span>Your license isn't genuine, and you may be a victim of software counterfeiting. Avoid interruption and keep your files safe with genuine Office today.</span>
        <NoticeButton $width={133} $gap={19}>Get genuine Office</NoticeButton>
        <NoticeButton $width={94} $gap={9}>Learn more</NoticeButton>
        <button aria-label="Close message"><svg width="9" height="9" viewBox="0 0 9 9" stroke="#555" strokeWidth="1.800"><path d="M1 1l7 7M8 1L1 8" /></svg></button>
      </Notice>

      <FormulaBar>
        <NameBox><input aria-label="Name box" defaultValue="E3" /><Triangle color="#777" /></NameBox>
        <Grip><svg width="3" height="12" viewBox="0 0 3 12" fill="#999"><path d="M0 0h2v2H0zM0 5h2v2H0zM0 10h2v2H0z" /></svg></Grip>
        <FormulaButtons>
          <button aria-label="Cancel"><svg width="12" height="12" viewBox="0 0 12 12" stroke="#bbb" strokeWidth="1.500"><path d="M1 1l10 10M11 1L1 11" /></svg></button>
          <button aria-label="Enter"><svg width="14" height="12" viewBox="0 0 14 12" fill="none" stroke="#bbb" strokeWidth="2"><path d="M1 7l4 4 8-10" /></svg></button>
          <button aria-label="Insert function"><svg width="14" height="16" viewBox="0 0 14 16" fontFamily="Liberation Serif, serif" fontStyle="italic" fontWeight="700" fill="#555"><text x="1" y="12" fontSize="15">f</text><text x="6" y="13" fontSize="10">x</text></svg></button>
        </FormulaButtons>
        <FormulaBox>
          <input aria-label="Formula" />
          <svg width="10" height="7" viewBox="0 0 10 7" fill="none" stroke="#555" strokeWidth="1.500"><path d="M1 1l4 4 4-4" /></svg>
        </FormulaBox>
      </FormulaBar>

      <Workspace>
        <VerticalScroll>
          <ScrollButton aria-label="Scroll up"><Triangle dir="up" /></ScrollButton>
          <Thumb $vertical />
          <ScrollButton aria-label="Scroll down"><Triangle /></ScrollButton>
        </VerticalScroll>
        <Sheet>
          {columns.map(([letter]) => <ColumnHead key={letter} $on={letter === 'E'}>{letter}</ColumnHead>)}
          <Corner><svg width="12" height="13" viewBox="0 0 12 13"><path d="M0 0v13h12z" fill="#b5b5b5" /></svg></Corner>
          {Array.from({ length: 23 }, (_, i) => <RowHead key={i} $row={i + 1} $on={i === 2}>{i + 1}</RowHead>)}

          <QuantityChart />

          <DarkBox $row={2} $from="L" $to="K" $columns="121fr 144fr" $edges="3px 0" $margin="-2px 0 -2px" $color="#fdbf2d">
            <dd>5610</dd><dt>اجمالي المبيعات</dt>
          </DarkBox>
          <DarkBox $row={1} $rows={2} $from="H" $to="G" $columns="82fr 129fr" $edges="1px 2px 3px" $margin="0 0 -2px -1px" $color="#fff">
            <dd /><dt>سعر القطعة</dt>
            <dd /><dt>أجمالي الفاتورة</dt>
          </DarkBox>

          <FieldInput id="branch" $row={1} $from="E" />
          <FieldLabel htmlFor="branch" $row={1} $from="D">الفرع</FieldLabel>
          <FieldInput id="item" $row={2} $from="E" />
          <FieldLabel htmlFor="item" $row={2} $from="D">الصنف</FieldLabel>
          <FieldInput id="count" $row={3} $from="E" $active />
          <FillHandle $row={3} $from="E" />
          <FieldLabel htmlFor="count" $row={3} $from="D">الكمية</FieldLabel>
          <AddButton $row={4} $rows={3} $from="E" $to="D">أضافة بيان</AddButton>

          <DateCard $row={2} $rows={4} $from="B" $to="A">
            <dd>08/03/2023</dd><dt>التاريخ</dt>
            <dd>12:40 AM</dd><dt>الوقت</dt>
          </DateCard>

          <SalesTable />
          <InvoiceChart />
        </Sheet>
      </Workspace>

      <SheetBar>
        <ScrollButton aria-label="Scroll left"><Triangle dir="left" /></ScrollButton>
        <Track />
        <Thumb />
        <ScrollButton aria-label="Scroll right"><Triangle dir="right" /></ScrollButton>
        <Grip><svg width="3" height="12" viewBox="0 0 3 12" fill="#999"><path d="M0 0h2v2H0zM0 5h2v2H0zM0 10h2v2H0z" /></svg></Grip>
        <SheetTabs>
          <SheetTab $width={86} aria-label="New sheet"><svg width="16" height="16" viewBox="0 0 16 16" fill="none" stroke="#777" strokeWidth="1.200"><circle cx="8" cy="8" r="7" /><path d="M8 4v8M4 8h8" /></svg></SheetTab>
          <SheetTab $width={80} $active>أضافة بيان</SheetTab>
          <SheetTab $width={65}>Sheet1</SheetTab>
          <SheetArrows><Triangle dir="left" color="#b5b5b5" /><Triangle dir="right" color="#b5b5b5" /></SheetArrows>
        </SheetTabs>
      </SheetBar>

      <Recorder>
        <svg width="62" height="16" viewBox="0 0 62 16" fill="none" stroke="#e6e6e6" strokeWidth="1.200"><path d="M1 3h11M1 8h11M1 13h11M24 2h12v12H24zM48 14V3h6M50 1v3M58 1v3M56 3h4" /><circle cx="55" cy="9" r="3.500" /><path d="M58 11l2 4" /></svg>
        <output>1895x983</output>
        <RecorderTools>
          <svg width="18" height="17" viewBox="0 0 18 17"><path d="M1 .5h5v16H1z" fill="#1d3f60" stroke="#111" /><path d="M12 .5h5v16h-5z" fill="#6b3f12" stroke="#111" /></svg>
          <Record><svg width="14" height="14"><circle cx="7" cy="7" r="7" fill="#dc2f2f" /></svg>REC</Record>
          <svg width="16" height="14" viewBox="0 0 16 14"><path d="M1 2h3l1-2h6l1 2h3v11H1z" fill="#e6e6e6" /><circle cx="8" cy="7.500" r="3.200" fill="none" stroke="#262c34" strokeWidth="2" /></svg>
          <svg width="14" height="14" viewBox="0 0 14 14"><path d="M1 13l1-4 7-7 3 3-7 7zM10 1l1-1 3 3-1 1z" fill="#e6e6e6" /></svg>
          <svg width="16" height="12" viewBox="0 0 16 12" fill="none" stroke="#ccc"><path d="M.5 1v9M6 6l4.500-4 4.500 4M6 11l4.500-4 4.500 4" /></svg>
          <svg width="11" height="11" viewBox="0 0 11 11" stroke="#ccc"><path d="M1 1l9 9M10 1l-9 9" /></svg>
        </RecorderTools>
        <ZoomLevel>0%</ZoomLevel>
      </Recorder>

      <Taskbar>
        <StartButton aria-label="Start"><svg width="17" height="17" viewBox="0 0 17 17" fill="#fff"><path d="M0 2.500L7 1.500V8H0zM8 1.300L17 0v8H8zM0 9h7v6.500l-7-1zM8 9h9v8l-9-1.300z" /></svg></StartButton>
        <SearchBox>
          <svg width="18" height="18" viewBox="0 0 18 18" fill="none" stroke="#333" strokeWidth="1.400"><circle cx="11" cy="6.500" r="5.500" /><path d="M7 11l-6 6" /></svg>
          <input aria-label="Search" placeholder="Type here to search" />
          <svg width="81" height="38" viewBox="0 0 81 38">
            <path d="M6 26h74l1 12H0z" fill="#b9793f" /><path d="M6 26h74v3H5z" fill="#d99a5b" /><path d="M1 33h80" stroke="#8d5628" />
            <path d="M9 17C12 12 15 4 19 1c4 3 7 11 9 16z" fill="#f3d02c" /><path d="M7 16h23c0 8-4 12-11 12S7 24 7 16z" fill="#b9bfdc" />
            <path d="M51 18C54 12 58 4 62 1c4 3 8 11 11 17z" fill="#ef4d86" /><path d="M50 17h24c0 8-5 12-12 12s-12-4-12-12z" fill="#c3c8e2" />
            <path d="M24 21C29 14 34 5 39 2c5 3 10 12 14 19z" fill="#35d39a" /><path d="M22 19c8 4 25 4 33 0 0 11-7 16-16 16s-17-5-17-16z" fill="#d5d9ee" />
          </svg>
        </SearchBox>
        <AppButton aria-label="Task view"><svg width="17" height="16" viewBox="0 0 17 16" fill="none" stroke="#fff" strokeWidth="1.200"><path d="M1 4.500h10v7H1zM1 0v2h10V0M1 16v-2h10v2M15 0v5M15 8v8" /><path d="M14 5h3v3h-3z" fill="#fff" stroke="none" /></svg></AppButton>
        {apps.map((a) => <AppButton key={a.name} aria-label={a.name} $open={a.open} $active={a.active}>{a.icon}</AppButton>)}
        <Tray>
          <svg width="16" height="18" viewBox="0 0 16 18" fill="none" stroke="#fff" strokeWidth="1.200"><circle cx="11" cy="4" r="3" /><circle cx="5" cy="9" r="3" /><path d="M1 17c0-6 8-6 8 0M9 9c3-3 6 0 6 4" /></svg>
          <Weather>
            <svg width="25" height="24" viewBox="0 0 25 24"><path d="M15 1c8 3 10 14 2 20-4 3-11 2-14-2 9 0 14-8 12-18z" fill="#f2a93b" /><path d="M3 9a3 3 0 0 1 0-5c1-4 7-4 8 0 4 0 4 5 1 5z" fill="#c9dcf6" /><path d="M13 22a3 3 0 0 1 0-5c1-4 7-4 8 0 4 0 4 5 1 5z" fill="#b5cdf0" /></svg>
            <span>16°C</span><span>غائم جزئيًا</span>
          </Weather>
          <TrayIcons>
            <svg width="14" height="9" viewBox="0 0 14 9" fill="none" stroke="#fff" strokeWidth="1.400"><path d="M1 8l6-6 6 6" /></svg>
            <svg width="15" height="18" viewBox="0 0 15 18" fill="none" stroke="#fff" strokeWidth="1.200"><path d="M2 5h8v8H2zM10 8l3-2v6l-3-2M3 2c2-1.500 4-1.500 6 0M3 16c2 1.500 4 1.500 6 0" /></svg>
            <svg width="17" height="15" viewBox="0 0 17 15" fill="none" stroke="#fff" strokeWidth="1.200"><path d="M6 2h10v8H4V7M1 1h5v5H1zM3.500 6v7M8 13h5M10.500 10v3" /></svg>
            <svg width="18" height="14" viewBox="0 0 18 14" fill="none" stroke="#fff" strokeWidth="1.200"><path d="M1 5h2l4-4v12L3 9H1zM9 5c1 1 1 3 0 4M12 3c2 2 2 6 0 8" /><path d="M14 1c3 3 3 9 0 12" opacity=".5" /></svg>
            <svg width="18" height="18" viewBox="0 0 18 18" fill="none" stroke="#fff" strokeWidth="1.200"><path d="M13 1L6 12l-1 4 3-3 7-10c0-2-1-3-2-2zM6 11c-7 0-6 6 0 5 5-1 5-6 10-6" /></svg>
            <span>ENG</span>
          </TrayIcons>
          <Clock><span>12:46 ص</span><span>٢٠٢٣/٠٣/٠٨</span></Clock>
          <svg width="24" height="26" viewBox="0 0 24 26"><path d="M0 3h16v14h-5v4l-4-4H0z" fill="#fff" /><path d="M3 7h10M3 10h10M3 13h7" stroke="#2c3a48" strokeWidth="1.300" /><circle cx="15" cy="17" r="8" fill="#39434d" fillOpacity=".9" stroke="#999" /><text x="15" y="21" textAnchor="middle" fontSize="11" fill="#fff">٢</text></svg>
        </Tray>
      </Taskbar>

      <CaptureFrame />
      <Watermark><span>مستقل</span><b>mostaql.com</b></Watermark>
    </Window>
  )
}

export default App
